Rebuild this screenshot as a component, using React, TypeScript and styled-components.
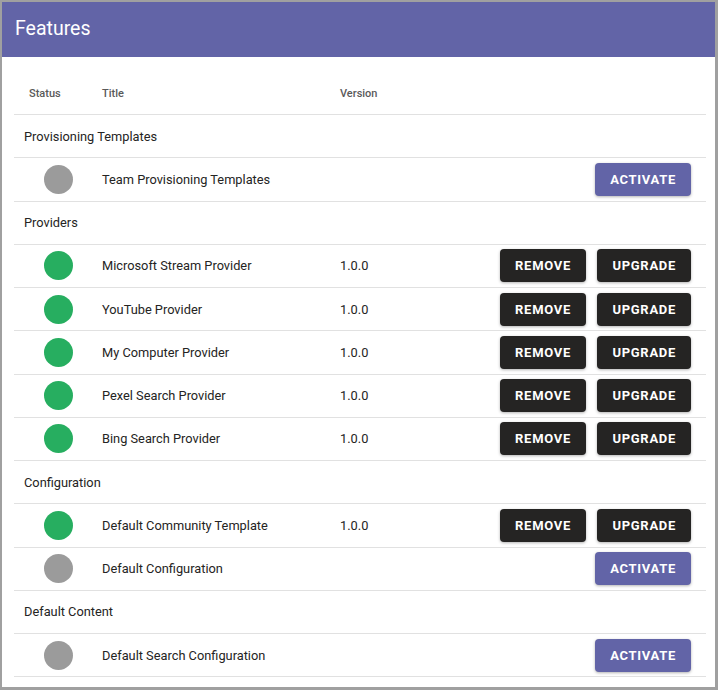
import React from "react";
import styled, { createGlobalStyle } from "styled-components";

const Global = createGlobalStyle`
  html, body { margin: 0; padding: 0; background: #fff; }
  body { font-family: Roboto, "Noto Sans", Arial, sans-serif; }
`;

const Frame = styled.div`
  box-sizing: border-box;
  width: 718px;
  height: 690px;
  border-style: solid;
  border-color: #a0a0a0;
  border-width: 2px 3px 3px 2px;
  overflow: hidden;
  background: #fff;
  display: flex;
  flex-direction: column;
`;

const TitleBar = styled.div`
  height: 55px;
  flex: none;
  background: #6264a7;
  color: #fff;
  display: flex;
  align-items: center;
  padding-left: 13px;
  padding-bottom: 2px;
  box-sizing: border-box;
  font-size: 19.5px;
  font-weight: 400;
`;

const Body = styled.div`
  padding: 13px 9px 0 12px;
`;

const Row = styled.div<{ $h?: number }>`
  display: grid;
  grid-template-columns: 88px 238px 1fr auto;
  align-items: center;
  height: ${(p) => p.$h ?? 42.25}px;
  border-bottom: 1px solid #e1e1e1;
  color: #252423;
  font-size: 12.8px;
`;

const HeadCell = styled.div<{ $pl?: number }>`
  font-size: 11px;
  font-weight: 500;
  color: #5a5a5a;
  padding-left: ${(p) => p.$pl ?? 0}px;
  padding-top: 2px;
`;

const GroupRow = styled.div`
  display: flex;
  align-items: center;
  height: 42.25px;
  border-bottom: 1px solid #e1e1e1;
  padding-left: 10px;
  color: #252423;
  font-size: 12.8px;
`;

const StatusCell = styled.div`
  padding-left: 30px;
  display: flex;
  align-items: center;
`;

const Dot = styled.div<{ $on: boolean }>`
  width: 29px;
  height: 29px;
  border-radius: 50%;
  background: ${(p) => (p.$on ? "#27ae60" : "#9b9b9b")};
`;

const Cell = styled.div``;

const Actions = styled.div`
  display: flex;
  gap: 11px;
  padding-right: 15px;
`;

const Btn = styled.button<{ $kind: "primary" | "dark" }>`
  height: 33px;
  border: none;
  border-radius: 4px;
  padding: 0 15px 0 15.5px;
  font-family: Roboto, Arial, sans-serif;
  font-size: 13px;
  font-weight: 700;
  letter-spacing: 0.7px;
  text-transform: uppercase;
  color: #fff;
  background: ${(p) => (p.$kind === "primary" ? "#6264a7" : "#252423")};
  box-shadow: 0 1px 3px rgba(0, 0, 0, 0.3);
  cursor: pointer;
`;

type Item = { title: string; version?: string; installed: boolean };
type Group = { name: string; items: Item[] };

const groups: Group[] = [
  { name: "Provisioning Templates", items: [{ title: "Team Provisioning Templates", installed: false }] },
  {
    name: "Providers",
    items: [
      { title: "Microsoft Stream Provider", version: "1.0.0", installed: true },
      { title: "YouTube Provider", version: "1.0.0", installed: true },
      { title: "My Computer Provider", version: "1.0.0", installed: true },
      { title: "Pexel Search Provider", version: "1.0.0", installed: true },
      { title: "Bing Search Provider", version: "1.0.0", installed: true },
    ],
  },
  {
    name: "Configuration",
    items: [
      { title: "Default Community Template", version: "1.0.0", installed: true },
      { title: "Default Configuration", installed: false },
    ],
  },
  { name: "Default Content", items: [{ title: "Default Search Configuration", installed: false }] },
];

export default function App() {
  return (
    <>
      <Global />
      <Frame>
        <TitleBar>Features</TitleBar>
        <Body>
          <Row $h={44}>
            <HeadCell $pl={15}>Status</HeadCell>
            <HeadCell>Title</HeadCell>
            <HeadCell>Version</HeadCell>
            <div />
          </Row>
          {groups.map((g) => (
            <React.Fragment key={g.name}>
              <GroupRow>{g.name}</GroupRow>
              {g.items.map((it) => (
                <Row key={it.title}>
                  <StatusCell>
                    <Dot $on={it.installed} />
                  </StatusCell>
                  <Cell>{it.title}</Cell>
                  <Cell>{it.version ?? ""}</Cell>
                  <Actions>
                    {it.installed ? (
                      <>
                        <Btn $kind="dark">Remove</Btn>
                        <Btn $kind="dark">Upgrade</Btn>
                      </>
                    ) : (
                      <Btn $kind="primary">Activate</Btn>
                    )}
                  </Actions>
                </Row>
              ))}
            </React.Fragment>
          ))}
        </Body>
      </Frame>
    </>
  );
}
